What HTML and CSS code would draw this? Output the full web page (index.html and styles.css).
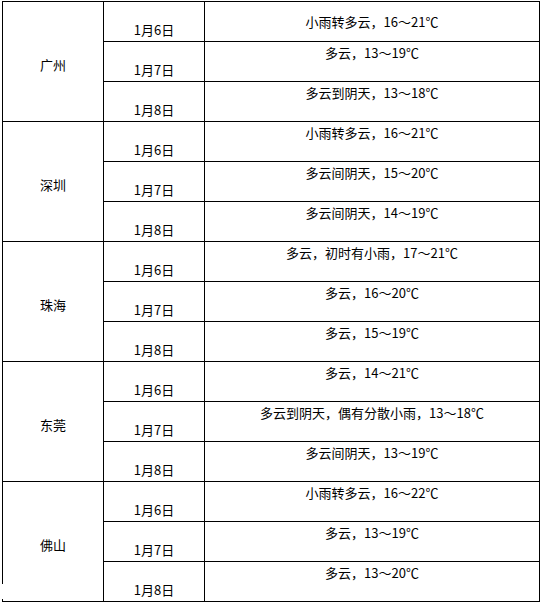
FILE: index.html
```html
<!DOCTYPE html>
<html lang="zh">
<head>
<meta charset="utf-8">
<link rel="stylesheet" href="styles.css">
</head>
<body>
<div class="page">
<table class="weather">
  <colgroup><col class="c-city"><col class="c-date"><col class="c-desc"></colgroup>
  <tbody>
    <tr><td class="city" rowspan="3">广州</td><td class="date">1月6日</td><td class="desc first">小雨转多云，16～21℃</td></tr>
    <tr><td class="date">1月7日</td><td class="desc">多云，13～19℃</td></tr>
    <tr><td class="date">1月8日</td><td class="desc">多云到阴天，13～18℃</td></tr>

    <tr><td class="city" rowspan="3">深圳</td><td class="date">1月6日</td><td class="desc">小雨转多云，16～21℃</td></tr>
    <tr><td class="date">1月7日</td><td class="desc">多云间阴天，15～20℃</td></tr>
    <tr><td class="date">1月8日</td><td class="desc">多云间阴天，14～19℃</td></tr>

    <tr><td class="city" rowspan="3">珠海</td><td class="date">1月6日</td><td class="desc">多云，初时有小雨，17～21℃</td></tr>
    <tr><td class="date">1月7日</td><td class="desc">多云，16～20℃</td></tr>
    <tr><td class="date">1月8日</td><td class="desc">多云，15～19℃</td></tr>

    <tr><td class="city" rowspan="3">东莞</td><td class="date">1月6日</td><td class="desc">多云，14～21℃</td></tr>
    <tr><td class="date">1月7日</td><td class="desc">多云到阴天，偶有分散小雨，13～18℃</td></tr>
    <tr><td class="date">1月8日</td><td class="desc">多云间阴天，13～19℃</td></tr>

    <tr><td class="city" rowspan="3">佛山</td><td class="date">1月6日</td><td class="desc">小雨转多云，16～22℃</td></tr>
    <tr><td class="date">1月7日</td><td class="desc">多云，13～19℃</td></tr>
    <tr><td class="date">1月8日</td><td class="desc">多云，13～20℃</td></tr>
  </tbody>
</table>
<div class="scan-blot"></div>
</div>
</body>
</html>
```

FILE: styles.css
```css
html, body {
  margin: 0;
  padding: 0;
  background: #fff;
}

.page {
  position: relative;
  width: 540px;
  height: 603px;
  overflow: hidden;
  padding: 1px 0 0 2px;
  box-sizing: border-box;
}

.weather {
  border-collapse: collapse;
  table-layout: fixed;
  width: 537px;
  font-family: "Noto Sans CJK SC", "Noto Sans", sans-serif;
  font-size: 13px;
  line-height: 15px;
  color: #000;
}

.c-city { width: 101px; }
.c-date { width: 101px; }
.c-desc { width: 335px; }

.weather tr {
  height: 40px;
}

.weather td {
  border: 1px solid #000;
  padding: 0;
  text-align: center;
  white-space: nowrap;
}

.city {
  vertical-align: middle;
  padding-top: 6px !important;
}

.date {
  vertical-align: bottom;
  padding-bottom: 4px !important;
}

.desc {
  vertical-align: top;
  padding-top: 3px !important;
}

.desc.first {
  padding-top: 12px !important;
}

.scan-blot {
  position: absolute;
  left: 0;
  top: 584px;
  width: 8px;
  height: 15px;
  background: #fff;
}
```
